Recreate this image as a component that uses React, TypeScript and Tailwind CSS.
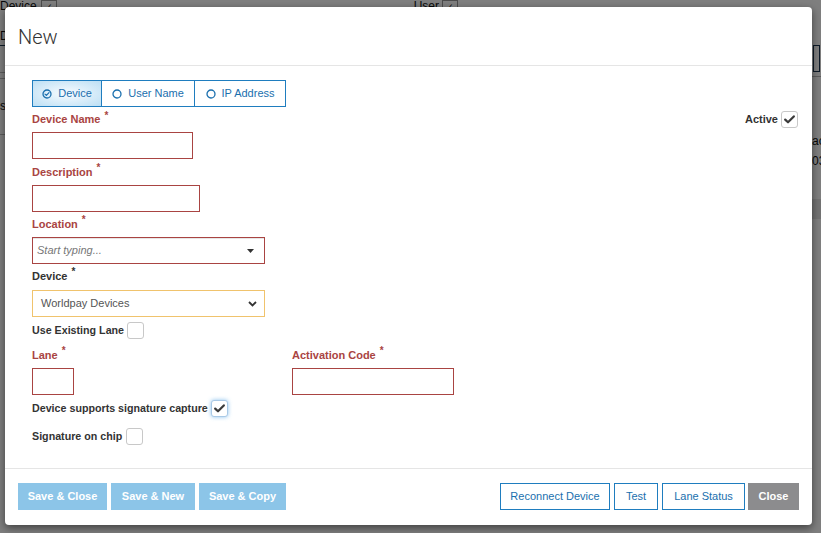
import React from "react";

const font = { fontFamily: '"Liberation Sans", Arial, sans-serif' };

function Check() {
  return (
    <svg width="11" height="9" viewBox="0 0 11 9" fill="none">
      <path d="M1.2 4.6 L4 7.3 L9.8 1.4" stroke="#3a3a3a" strokeWidth="2.2" strokeLinecap="round" strokeLinejoin="round" />
    </svg>
  );
}

function Box({ checked, focus }: { checked?: boolean; focus?: boolean }) {
  return (
    <span
      className={
        "inline-flex w-[17px] h-[17px] items-center justify-center rounded-[3px] border bg-white " +
        (focus ? "border-[#a9c9e6] shadow-[0_0_4px_rgba(102,175,233,0.75)]" : "border-[#c8c8c8]")
      }
    >
      {checked ? <Check /> : null}
    </span>
  );
}

function Label({ text, red, className }: { text: string; red?: boolean; className?: string }) {
  return (
    <div className={"h-[16px] flex items-center text-[11px] font-bold leading-none " + (red ? "text-[#a94442] " : "text-[#333] ") + (className || "")}>
      <span>{text}</span>
      <span className="ml-[4px] -mt-[8px] text-[10px]">*</span>
    </div>
  );
}

function TabIcon({ checked }: { checked?: boolean }) {
  return (
    <svg width="10" height="10" viewBox="0 0 10 10" fill="none" className="mr-[6px]">
      <circle cx="5" cy="5" r="4" stroke="#1a6fae" strokeWidth="1.3" />
      {checked ? <path d="M3 5.1 L4.4 6.4 L7 3.6" stroke="#1a6fae" strokeWidth="1.2" strokeLinecap="round" strokeLinejoin="round" /> : null}
    </svg>
  );
}

export default function App() {
  return (
    <div className="relative w-[821px] h-[533px] overflow-hidden bg-white" style={font}>
      {/* underlying page */}
      <div className="flex flex-col text-[12px] text-[#111]">
        <div className="flex h-[14px] items-start">
          <span className="leading-[12px]">Device</span>
          <span className="ml-[4px] w-[16px] h-[14px] border border-[#999] text-[9px] leading-[12px] text-center">✓</span>
          <span className="ml-[357px] leading-[12px]">User</span>
          <span className="ml-[3px] w-[16px] h-[14px] border border-[#999] text-[9px] leading-[12px] text-center">✓</span>
        </div>
        <div className="flex justify-between">
          <div className="w-[5px] flex flex-col">
            <div className="h-[31px] flex items-end"><span>D</span></div>
            <div className="h-[1px] bg-[#1a3550]"></div>
            <div className="h-[27px] border-b border-[#bbb]"></div>
            <div className="h-[6px] border-b border-[#bbb]"></div>
            <div className="h-[36px] flex items-end"><span>s</span></div>
            <div className="h-[20px] border-b border-[#bbb]"></div>
          </div>
          <div className="w-[9px] flex flex-col">
            <div className="h-[31px]"></div>
            <div className="ml-[1px] w-[7px] h-[27px] border border-[#1a3550]"></div>
            <div className="h-[5px] border-b border-[#bbb]"></div>
            <div className="h-[70px] flex items-end"><span className="leading-none">ac</span></div>
            <div className="h-[20px] flex items-end"><span className="leading-none">03</span></div>
            <div className="h-[32px]"></div>
            <div className="h-[20px] bg-[#e6e6e6]"></div>
          </div>
        </div>
      </div>

      {/* overlay */}
      <div className="absolute inset-0 bg-black/50"></div>

      {/* modal */}
      <div className="absolute left-[5px] top-[7px] w-[807px] h-[518px] bg-white rounded-[4px] shadow-[0_3px_9px_rgba(0,0,0,0.5)] flex flex-col">
        <div className="h-[59px] border-b border-[#e5e5e5] pl-[13px] pt-[18px]">
          <h4 className="text-[20px] leading-[24px] text-[#333]" style={{ fontFamily: 'Roboto, "Liberation Sans", sans-serif', fontWeight: 300 }}>New</h4>
        </div>

        <div className="flex-1 pl-[27px] pr-[14px] pt-[14px] flex flex-col">
          {/* tabs */}
          <div className="flex h-[27px] text-[11px] text-[#1a6fae]">
            <div className="w-[70px] flex items-center justify-center border border-[#1f7dbf] bg-[radial-gradient(ellipse_at_center,#f2f9fe_10%,#bcdff4_100%)]">
              <TabIcon checked />
              <span>Device</span>
            </div>
            <div className="w-[93px] flex items-center justify-center border-y border-r border-[#1f7dbf]">
              <TabIcon />
              <span>User Name</span>
            </div>
            <div className="w-[91px] flex items-center justify-center border-y border-r border-[#1f7dbf]">
              <TabIcon />
              <span>IP Address</span>
            </div>
          </div>

          <div className="mt-[4px] h-[17px] flex items-center justify-between">
            <Label text="Device Name" red />
            <div className="flex items-center">
              <span className="text-[11px] font-bold text-[#333] mr-[3px]">Active</span>
              <Box checked />
            </div>
          </div>
          <div className="mt-[4px] w-[161px] h-[27px] border border-[#a94442]"></div>

          <Label text="Description" red className="mt-[5px]" />
          <div className="mt-[5px] w-[168px] h-[27px] border border-[#a94442]"></div>

          <Label text="Location" red className="mt-[4px]" />
          <div className="mt-[5px] w-[233px] h-[27px] border border-[#a94442] flex items-center justify-between pl-[4px] pr-[10px] shadow-[inset_0_1px_0_#e6e6e6]">
            <span className="text-[11px] italic text-[#777]">Start typing...</span>
            <svg width="7" height="4" viewBox="0 0 7 4"><path d="M0 0 L7 0 L3.5 4 Z" fill="#333" /></svg>
          </div>

          <Label text="Device" className="mt-[4px]" />
          <div className="mt-[6px] w-[233px] h-[27px] border border-[#f0c36d] flex items-center justify-between pl-[8px] pr-[7px]">
            <span className="text-[11px] text-[#555]">Worldpay Devices</span>
            <svg width="9" height="6" viewBox="0 0 9 6" fill="none"><path d="M1 1 L4.5 4.5 L8 1" stroke="#333" strokeWidth="1.8" /></svg>
          </div>

          <div className="mt-[5px] h-[17px] flex items-center">
            <span className="text-[10.7px] font-bold text-[#333] mr-[3px]">Use Existing Lane</span>
            <Box />
          </div>

          <div className="mt-[8px] flex">
            <div className="w-[260px]">
              <Label text="Lane" red />
              <div className="mt-[5px] w-[42px] h-[27px] border border-[#a94442]"></div>
            </div>
            <div>
              <Label text="Activation Code" red />
              <div className="mt-[5px] w-[162px] h-[27px] border border-[#a94442]"></div>
            </div>
          </div>

          <div className="mt-[5px] h-[17px] flex items-center">
            <span className="text-[10.7px] font-bold text-[#333] mr-[3px]">Device supports signature capture</span>
            <Box checked focus />
          </div>

          <div className="mt-[11px] h-[17px] flex items-center">
            <span className="text-[10.7px] font-bold text-[#333] mr-[4px]">Signature on chip</span>
            <Box />
          </div>
        </div>

        <div className="h-[57px] border-t border-[#e5e5e5] px-[13px] pt-[14px] flex justify-between text-[11px]">
          <div className="flex gap-[4px]">
            <div className="w-[89px] h-[27px] bg-[#8cc5e8] text-white font-bold flex items-center justify-center">Save &amp; Close</div>
            <div className="w-[84px] h-[27px] bg-[#8cc5e8] text-white font-bold flex items-center justify-center">Save &amp; New</div>
            <div className="w-[87px] h-[27px] bg-[#8cc5e8] text-white font-bold flex items-center justify-center">Save &amp; Copy</div>
          </div>
          <div className="flex gap-[4px]">
            <div className="w-[110px] h-[27px] border border-[#1f7dbf] text-[#1a6fae] flex items-center justify-center">Reconnect Device</div>
            <div className="w-[44px] h-[27px] border border-[#1f7dbf] text-[#1a6fae] flex items-center justify-center">Test</div>
            <div className="w-[83px] h-[27px] border border-[#1f7dbf] text-[#1a6fae] flex items-center justify-center">Lane Status</div>
            <div className="w-[51px] h-[27px] bg-[#8c8c8e] text-white font-bold flex items-center justify-center -ml-[1px]">Close</div>
          </div>
        </div>
      </div>
    </div>
  );
}
